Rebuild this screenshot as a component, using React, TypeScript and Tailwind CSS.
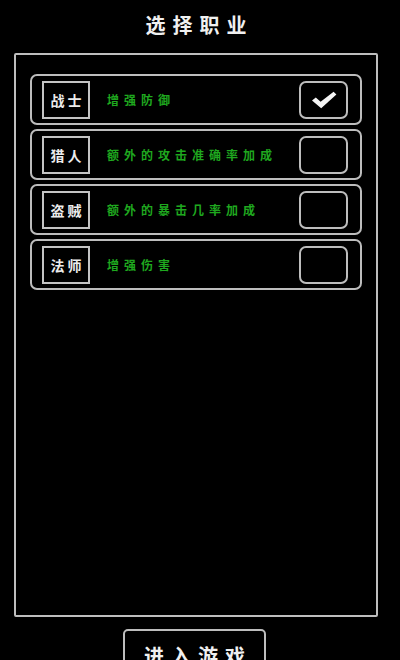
const FONT = { fontFamily: '"Noto Sans CJK SC", "Noto Sans", sans-serif' };

interface Job {
  name: string;
  desc: string;
  selected?: boolean;
}

const jobs: Job[] = [
  { name: "战士", desc: "增强防御", selected: true },
  { name: "猎人", desc: "额外的攻击准确率加成" },
  { name: "盗贼", desc: "额外的暴击几率加成" },
  { name: "法师", desc: "增强伤害" },
];

function CheckMark() {
  return (
    <svg width="26" height="18" viewBox="0 0 26 18" fill="#f5f5f5">
      <path d="M1 9.5 L4.8 6.6 L9.6 10.8 L22.6 0.8 L25.4 3.4 L10.2 17.2 Z" />
    </svg>
  );
}

function JobRow({ job }: { job: Job }) {
  return (
    <div className="flex h-[51px] items-center rounded-[7px] border-2 border-[#bdbdbd] pl-[10px] pr-[12px]">
      <div className="flex h-[38px] w-[48px] items-center justify-center border-2 border-[#c4c4c4] pl-[3px]">
        <span className="text-[14px] font-bold leading-none tracking-[3px] text-[#ececec]">
          {job.name}
        </span>
      </div>
      <div className="ml-[17px] flex-1 text-[12px] font-bold leading-none tracking-[5px] text-[#1fa81f]">
        {job.desc}
      </div>
      <div className="flex h-[38px] w-[49px] items-center justify-center rounded-[7px] border-2 border-[#bdbdbd]">
        {job.selected && <CheckMark />}
      </div>
    </div>
  );
}

export default function App() {
  return (
    <div className="h-[660px] w-[400px] overflow-hidden bg-black" style={FONT}>
      <div className="ml-[14px] flex w-[364px] flex-col items-center">
        <div className="h-[53px] pl-[7px] pt-[12px] text-[20px] font-bold leading-[26px] tracking-[7px] text-[#f0f0f0]">
          选择职业
        </div>
        <div className="flex h-[564px] w-full flex-col gap-[4px] rounded-[2px] border-2 border-[#bdbdbd] px-[14px] pt-[19px]">
          {jobs.map((job) => (
            <JobRow key={job.name} job={job} />
          ))}
        </div>
        <button
          type="button"
          className="mt-[12px] mr-[3px] h-[46px] w-[143px] rounded-[5px] border-2 border-[#bdbdbd] pl-[7px] pt-[8px] text-[20px] font-bold leading-[26px] tracking-[7px] text-[#f0f0f0]"
          style={{ alignSelf: "center" }}
        >
          <span className="block">进入游戏</span>
        </button>
      </div>
    </div>
  );
}
